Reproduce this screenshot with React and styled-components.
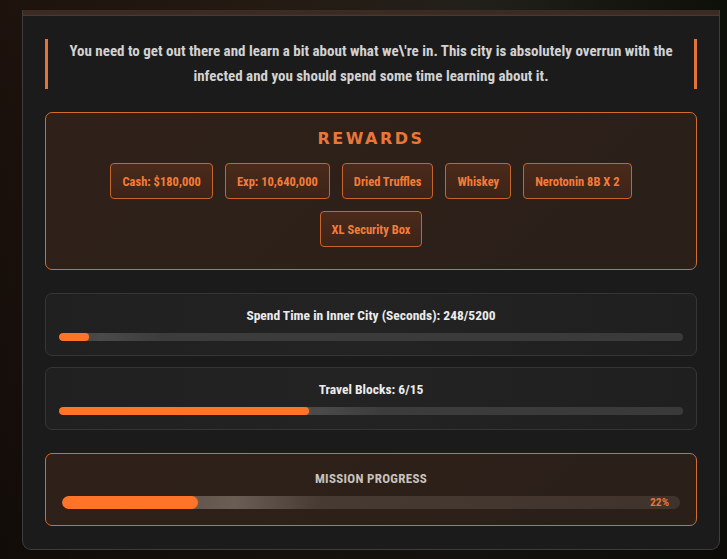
import React from 'react';
import styled, { createGlobalStyle } from 'styled-components';

const GlobalStyle = createGlobalStyle`
  html, body {
    margin: 0;
    height: 100%;
  }
  body {
    background:
      linear-gradient(180deg, rgba(0, 0, 0, 0) 0%, rgba(10, 8, 6, 0.6) 100%),
      linear-gradient(90deg, #1d120c 0%, #241a12 35%, #22201a 65%, #0d0f09 100%);
    font-family: Roboto, 'Open Sans', sans-serif;
    font-stretch: 75%;
    overflow: hidden;
  }
`;

const Page = styled.div`
  padding: 10px 8px 0 22px;
`;

const Panel = styled.div`
  width: 698px;
  box-sizing: border-box;
  background: #1b1b1b;
  border: 1px solid #3d3d3d;
  border-top: none;
  border-radius: 0 0 9px 9px;
  overflow: hidden;
`;

const HeaderBand = styled.div`
  height: 6px;
  background: linear-gradient(180deg, #3e2c23 0%, #3a2a21 70%, #4a403b 100%);
`;

const Body = styled.div`
  display: flex;
  flex-direction: column;
  gap: 23px;
  padding: 23px 22px 23px 22px;
`;

const Quote = styled.p`
  margin: 0;
  padding: 0 10px;
  border-left: 3px solid #e2743a;
  border-right: 3px solid #e2743a;
  text-align: center;
  color: #d2d2d2;
  font-weight: 700;
  font-size: 15px;
  line-height: 25px;
`;

const Box = styled.div`
  border: 1px solid ${(p) => (p.$accent ? '#d56c2c' : '#353535')};
  border-radius: 7px;
  background: ${(p) =>
    p.$accent
      ? 'linear-gradient(135deg, #2f2119 0%, #2c2019 60%, #2a1f19 100%)'
      : 'linear-gradient(90deg, #202020 0%, #232323 50%, #1f1f1f 100%)'};
`;

const Rewards = styled(Box)`
  padding: 15px 20px 22px;
  display: flex;
  flex-direction: column;
  align-items: center;
`;

const RewardsTitle = styled.h3`
  margin: 0 0 13px;
  font-family: 'DejaVu Sans', sans-serif;
  font-stretch: normal;
  font-weight: 700;
  font-size: 16px;
  line-height: 22px;
  letter-spacing: 2.5px;
  color: #e8773a;
`;

const ChipList = styled.div`
  display: flex;
  flex-wrap: wrap;
  justify-content: center;
  gap: 12px;
`;

const Chip = styled.span`
  height: 36px;
  box-sizing: border-box;
  display: flex;
  align-items: center;
  padding: 0 11px;
  border: 1px solid #c8642c;
  border-radius: 4px;
  background: linear-gradient(180deg, #4a2a1a 0%, #3d2419 100%);
  color: #f47c38;
  font-weight: 700;
  font-size: 12.5px;
`;

const Tasks = styled.div`
  display: flex;
  flex-direction: column;
  gap: 11px;
`;

const Task = styled(Box)`
  padding: 11px 13px 14px;
  display: flex;
  flex-direction: column;
  gap: 8px;
`;

const TaskTitle = styled.div`
  text-align: center;
  color: #ececec;
  font-weight: 700;
  font-size: 13.5px;
  line-height: 20px;
`;

const Track = styled.div`
  position: relative;
  height: ${(p) => p.$h}px;
  border-radius: ${(p) => p.$h / 2}px;
  background: ${(p) => p.$bg};
  overflow: hidden;
`;

const Fill = styled.div`
  height: 100%;
  border-radius: inherit;
  background: #ff7429;
  box-shadow: 0 0 4px rgba(255, 116, 41, 0.35);
`;

const Mission = styled(Box)`
  padding: 15px 16px 16px;
  display: flex;
  flex-direction: column;
  gap: 7px;
`;

const MissionTitle = styled.div`
  text-align: center;
  color: #c9c2bc;
  font-weight: 700;
  font-size: 13px;
  line-height: 20px;
  letter-spacing: 0.3px;
`;

const Percent = styled.span`
  position: absolute;
  right: 11px;
  top: 0;
  line-height: 13px;
  font-size: 11.5px;
  font-weight: 700;
  color: #ea7432;
`;

const rewards = [
  'Cash: $180,000',
  'Exp: 10,640,000',
  'Dried Truffles',
  'Whiskey',
  'Nerotonin 8B X 2',
  'XL Security Box',
];

const tasks = [
  { label: 'Spend Time in Inner City (Seconds)', done: 248, total: 5200 },
  { label: 'Travel Blocks', done: 6, total: 15 },
];

function pct(done, total) {
  return Math.max((done / total) * 100, 4.8);
}

function App() {
  const progress = 22;
  return (
    <>
      <GlobalStyle />
      <Page>
        <Panel>
          <HeaderBand />
          <Body>
            <Quote>
              You need to get out there and learn a bit about what we\'re in. This city is absolutely overrun with the
              infected and you should spend some time learning about it.
            </Quote>

            <Rewards $accent>
              <RewardsTitle>REWARDS</RewardsTitle>
              <ChipList>
                {rewards.map((r) => (
                  <Chip key={r}>{r}</Chip>
                ))}
              </ChipList>
            </Rewards>

            <Tasks>
              {tasks.map((t) => {
                const w = pct(t.done, t.total);
                return (
                  <Task key={t.label}>
                    <TaskTitle>
                      {t.label}: {t.done}/{t.total}
                    </TaskTitle>
                    <Track
                      $h={8}
                      $bg={`linear-gradient(90deg, #3a3a3a 0%, #4a4a4a ${w + 2}%, #3c3c3c ${w + 12}%, #3a3a3a 100%)`}
                    >
                      <Fill style={{ width: `${w}%` }} />
                    </Track>
                  </Task>
                );
              })}
            </Tasks>

            <Mission $accent>
              <MissionTitle>MISSION PROGRESS</MissionTitle>
              <Track
                $h={13}
                $bg={`linear-gradient(90deg, #4a3f38 0%, #6a5d54 ${progress + 6}%, #463a33 ${progress + 20}%, #3f332c 100%)`}
              >
                <Fill style={{ width: `${progress}%` }} />
                <Percent>{progress}%</Percent>
              </Track>
            </Mission>
          </Body>
        </Panel>
      </Page>
    </>
  );
}

export default App;
